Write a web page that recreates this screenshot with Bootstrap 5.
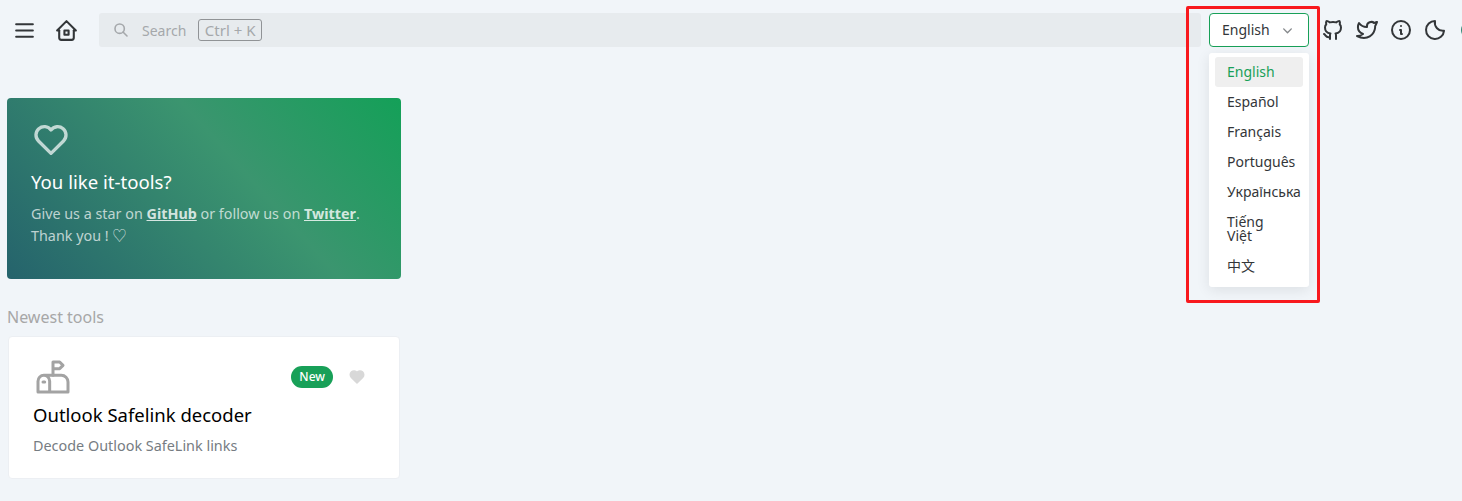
<!DOCTYPE html>
<html lang="en">
<head>
    <meta charset="UTF-8" />
    <meta name="viewport" content="width=device-width, initial-scale=1.0" />
    <title>IT Tools</title>
    <link href="https://cdn.jsdelivr.net/npm/bootstrap@5.3.0/dist/css/bootstrap.min.css" rel="stylesheet">
    <style>
        html, body {
            overflow: hidden;
        }

        body {
            background: #f1f5f9;
            color: #333639;
            font-family: "Noto Sans", "Noto Sans CJK SC", sans-serif;
            font-size: 14px;
            height: 501px;
            position: relative;
        }

        svg {
            display: block;
            fill: none;
            stroke: currentColor;
            stroke-width: 2;
            stroke-linecap: round;
            stroke-linejoin: round;
        }

        .top-bar {
            width: 1500px;
            height: 34px;
            margin-top: 13px;
            padding-left: 12px;
        }

        .icon-btn {
            width: 25px;
            height: 25px;
            color: #333639;
        }

        .icon-btn + .icon-btn {
            margin-left: 17px;
        }

        .search-box {
            width: 1102px;
            height: 34px;
            margin-left: 20px;
            margin-right: 8px;
            padding-left: 14px;
            background: #e7ebee;
            border-radius: 3px;
            color: #a5a8ab;
        }

        .search-box svg {
            width: 16px;
            height: 16px;
            margin-right: 13px;
            stroke-width: 2.4;
        }

        .key-hint {
            margin-left: 12px;
            padding: 0 5.5px;
            height: 22px;
            line-height: 20px;
            font-size: 15px;
            border: 1px solid #909396;
            border-radius: 3px;
        }

        .lang-wrap {
            width: 100px;
            margin-right: 2px;
        }

        .lang-btn {
            --bs-btn-padding-x: 12px;
            --bs-btn-padding-y: 0;
            --bs-btn-font-size: 14px;
            --bs-btn-border-radius: 4px;
            --bs-btn-color: #333639;
            --bs-btn-border-color: #18a058;
            --bs-btn-bg: #fff;
            width: 100px;
            height: 34px;
            padding-bottom: 2px;
            padding-right: 14px;
        }

        .lang-btn svg {
            width: 13px;
            height: 13px;
            margin-top: 2px;
            color: #85888b;
            stroke-width: 2.6;
        }

        .lang-menu {
            --bs-dropdown-min-width: 100px;
            --bs-dropdown-padding-x: 6px;
            --bs-dropdown-padding-y: 4px;
            --bs-dropdown-spacer: 0;
            --bs-dropdown-font-size: 14px;
            --bs-dropdown-border-width: 0;
            --bs-dropdown-border-radius: 3px;
            width: 100px;
            padding-bottom: 6px;
            top: 40px;
            left: 0;
            box-shadow: 0 3px 14px rgba(0, 0, 0, .09);
        }

        .lang-menu .dropdown-item {
            --bs-dropdown-item-padding-x: 12px;
            --bs-dropdown-item-padding-y: 0;
            --bs-dropdown-item-border-radius: 3px;
            --bs-dropdown-link-color: #333639;
            min-height: 30px;
            line-height: 30px;
            white-space: nowrap;
        }

        .lang-menu .dropdown-item.two-line {
            line-height: 14px;
            padding-top: 8px;
            padding-bottom: 8px;
            min-height: 44px;
        }

        .lang-menu .dropdown-item.active {
            background: #efefef;
            color: #18a058;
        }

        .side-icon {
            width: 24px;
            height: 24px;
            margin-left: 10px;
        }

        .edge-dot {
            fill: #2e8573;
            stroke: none;
        }

        .promo-box {
            width: 394px;
            height: 181px;
            margin: 51px 0 0 7px;
            padding: 22px 24px;
            border: 0;
            border-radius: 4px;
            background: linear-gradient(48deg, #25636c 0%, #3b956f 60%, #14a058 100%);
            color: rgba(255, 255, 255, .7);
        }

        .promo-box svg {
            width: 40px;
            height: 40px;
            margin-bottom: 9px;
        }

        .promo-title {
            color: #fff;
            font-size: 18.6px;
            line-height: 26px;
            font-weight: 400;
            margin-bottom: 8px;
        }

        .promo-text {
            font-size: 14.35px;
            line-height: 22px;
            margin: 0;
        }

        .promo-text a {
            color: rgba(255, 255, 255, .8);
            font-weight: 700;
        }

        .section-label {
            margin: 26px 0 7px 7px;
            font-size: 16px;
            line-height: 24px;
            color: #a7a7a7;
            font-weight: 400;
        }

        .tool-box {
            width: 392px;
            height: 143px;
            margin-left: 8px;
            padding: 20px 24px;
            --bs-card-border-color: #eceff3;
            --bs-card-border-radius: 4px;
        }

        .tool-icon {
            width: 40px;
            height: 40px;
            color: #a3a3a3;
            stroke-width: 1.8;
        }

        .new-tag {
            --bs-badge-padding-x: 8px;
            --bs-badge-padding-y: 0;
            --bs-badge-font-size: 12px;
            --bs-badge-border-radius: 11px;
            --bs-badge-font-weight: 500;
            line-height: 22px;
            background: #18a058;
        }

        .fav-icon {
            width: 18px;
            height: 18px;
            margin: 0 9px 0 15px;
            color: #d8d8d8;
            fill: currentColor;
        }

        .tool-title {
            margin: 3px 0 0;
            font-size: 18.5px;
            line-height: 30px;
            font-weight: 400;
            color: #000;
        }

        .tool-desc {
            margin: 6px 0 0;
            font-size: 14.4px;
            line-height: 20px;
            color: #767c82;
        }

        .red-mark {
            position: absolute;
            left: 1186px;
            top: 6px;
            width: 134px;
            height: 297px;
            border: 3px solid #f8191e;
            border-radius: 2px;
            pointer-events: none;
        }
    </style>
</head>
<body>
    <header class="top-bar d-flex align-items-center">
        <a href="#" class="icon-btn" aria-label="Menu">
            <svg viewBox="0 0 24 24" width="25" height="25"><path d="M4 6l16 0" /><path d="M4 12l16 0" /><path d="M4 18l16 0" /></svg>
        </a>
        <a href="#" class="icon-btn" aria-label="Home">
            <svg viewBox="0 0 24 24" width="25" height="25"><path d="M5 12l-2 0l9 -9l9 9l-2 0" /><path d="M5 12v7a2 2 0 0 0 2 2h10a2 2 0 0 0 2 -2v-7" /><path d="M10 12h4v4h-4z" /></svg>
        </a>
        <div class="search-box d-flex align-items-center">
            <svg viewBox="0 0 24 24"><circle cx="10" cy="10" r="7" /><path d="M21 21l-6 -6" /></svg>
            <span>Search</span>
            <span class="key-hint">Ctrl + K</span>
        </div>
        <div class="lang-wrap position-relative">
            <button type="button" class="btn lang-btn d-flex align-items-center justify-content-between">
                English
                <svg viewBox="0 0 24 24"><path d="M5 9l7 7l7 -7" /></svg>
            </button>
            <ul class="dropdown-menu show lang-menu">
                <li><a class="dropdown-item active" href="#">English</a></li>
                <li><a class="dropdown-item" href="#">Español</a></li>
                <li><a class="dropdown-item" href="#">Français</a></li>
                <li><a class="dropdown-item" href="#">Português</a></li>
                <li><a class="dropdown-item" href="#">Українська</a></li>
                <li><a class="dropdown-item two-line" href="#">Tiếng<br>Việt</a></li>
                <li><a class="dropdown-item" href="#">中文</a></li>
            </ul>
        </div>
        <svg class="side-icon" viewBox="0 0 24 24"><path d="M9 19c-4.3 1.4 -4.3 -2.5 -6 -3m12 5v-3.5c0 -1 .1 -1.4 -.5 -2c2.8 -.3 5.5 -1.4 5.5 -6a4.6 4.6 0 0 0 -1.3 -3.2a4.2 4.2 0 0 0 -.1 -3.2s-1.1 -.3 -3.5 1.3a12.3 12.3 0 0 0 -6.2 0c-2.4 -1.6 -3.5 -1.3 -3.5 -1.3a4.2 4.2 0 0 0 -.1 3.2a4.6 4.6 0 0 0 -1.3 3.2c0 4.6 2.7 5.7 5.5 6c-.6 .6 -.6 1.2 -.5 2v3.5" /></svg>
        <svg class="side-icon" viewBox="0 0 24 24"><path d="M22 4.01c-1 .49 -1.98 .689 -3 .99c-1.121 -1.265 -2.783 -1.335 -4.38 -.737s-2.643 2.06 -2.62 3.737v1c-3.245 .083 -6.135 -1.395 -8 -4c0 0 -4.182 7.433 4 11c-1.872 1.247 -3.739 2.088 -6 2c3.308 1.803 6.913 2.423 10.034 1.517c3.58 -1.04 6.522 -3.723 7.651 -7.742a13.84 13.84 0 0 0 .497 -3.753c0 -.249 1.51 -2.772 1.818 -4.013z" /></svg>
        <svg class="side-icon" viewBox="0 0 24 24"><circle cx="12" cy="12" r="9" /><path d="M12 8h.01" /><path d="M11 12h1v4h1" /></svg>
        <svg class="side-icon" viewBox="0 0 24 24"><path d="M12 3a9 9 0 1 0 9 9.8a8.2 8.2 0 0 1 -9 -9.8z" /></svg>
        <svg class="side-icon" viewBox="0 0 24 24"><circle class="edge-dot" cx="13" cy="12" r="9" /></svg>
    </header>

    <main>
        <section class="card promo-box">
            <svg viewBox="0 0 24 24"><path d="M19.5 12.572l-7.5 7.428l-7.5 -7.428a5 5 0 1 1 7.5 -6.566a5 5 0 1 1 7.5 6.572" /></svg>
            <h5 class="promo-title">You like it-tools?</h5>
            <p class="promo-text">Give us a star on <a href="#">GitHub</a> or follow us on <a href="#">Twitter</a>. Thank you ! ♡</p>
        </section>

        <h6 class="section-label">Newest tools</h6>
        <section class="card tool-box">
            <div class="d-flex justify-content-between align-items-center">
                <svg class="tool-icon" viewBox="0 0 24 24"><path d="M10 21v-6.5a3.5 3.5 0 0 0 -7 0v6.5h18v-6a4 4 0 0 0 -4 -4h-10.5" /><path d="M12 11v-8h4l2 2l-2 2h-4" /><path d="M6 15h1" /></svg>
                <div class="d-flex align-items-center">
                    <span class="badge new-tag">New</span>
                    <svg class="fav-icon" viewBox="0 0 24 24"><path d="M19.5 12.572l-7.5 7.428l-7.5 -7.428a5 5 0 1 1 7.5 -6.566a5 5 0 1 1 7.5 6.572" /></svg>
                </div>
            </div>
            <h5 class="tool-title">Outlook Safelink decoder</h5>
            <p class="tool-desc">Decode Outlook SafeLink links</p>
        </section>
    </main>

    <div class="red-mark"></div>
</body>
</html>
